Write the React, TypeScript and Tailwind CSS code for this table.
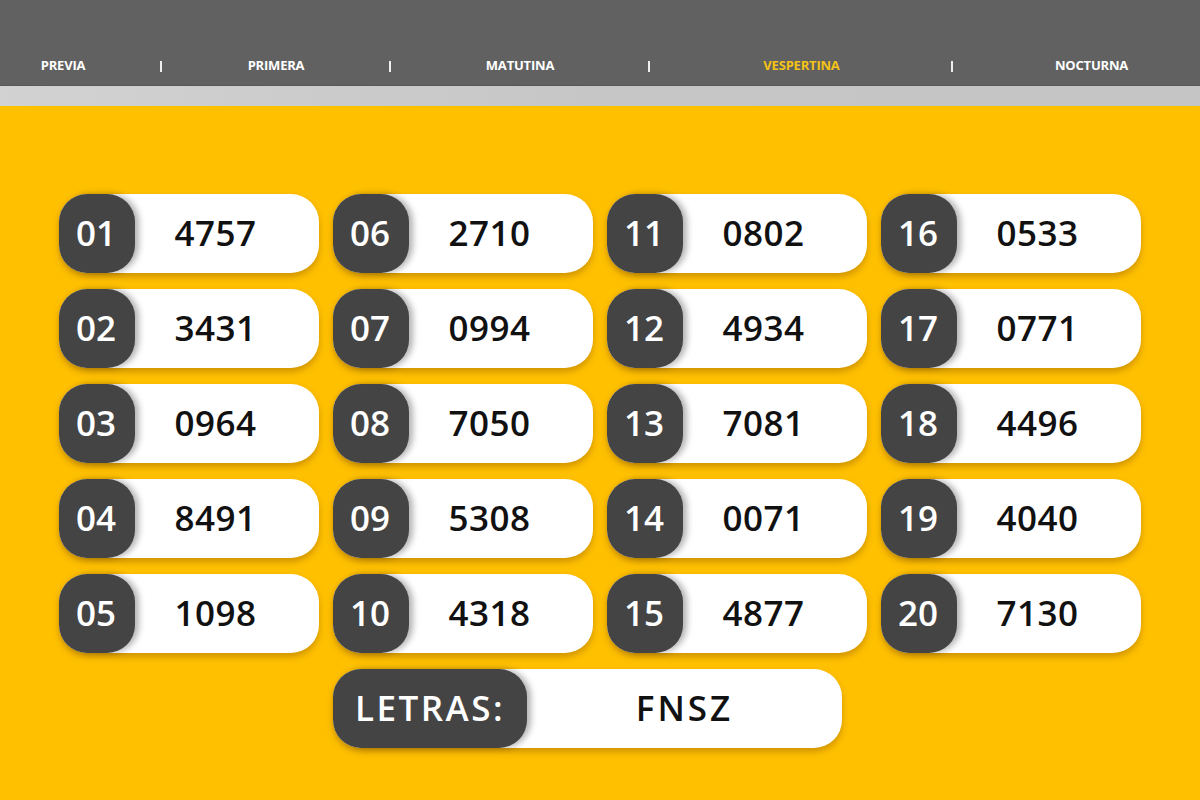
import React from "react";

const nums = [
  ["01", "4757"], ["06", "2710"], ["11", "0802"], ["16", "0533"],
  ["02", "3431"], ["07", "0994"], ["12", "4934"], ["17", "0771"],
  ["03", "0964"], ["08", "7050"], ["13", "7081"], ["18", "4496"],
  ["04", "8491"], ["09", "5308"], ["14", "0071"], ["19", "4040"],
  ["05", "1098"], ["10", "4318"], ["15", "4877"], ["20", "7130"],
];

const Sep = ({ w }: { w: string }) => (
  <div className={`${w} flex justify-center`}>
    <div className="w-[2px] h-[11px] bg-white/90" />
  </div>
);

export default function App() {
  const font = { fontFamily: '"Open Sans", "Liberation Sans", sans-serif' };
  return (
    <div className="w-[1200px] h-[800px] bg-[#ffc000] overflow-hidden" style={font}>
      <div className="h-[86px] bg-[#616161] border-b border-[#575757] flex items-end pb-[12px]">
        <div className="flex items-center h-[14px] text-[13px] font-bold text-white tracking-[-0.2px]">
          <div className="w-[126px] text-center">PREVIA</div>
          <Sep w="w-[70px]" />
          <div className="w-[160px] text-center">PRIMERA</div>
          <Sep w="w-[68px]" />
          <div className="w-[192px] text-center">MATUTINA</div>
          <Sep w="w-[66px]" />
          <div className="w-[239px] text-center text-[#f3c316]">VESPERTINA</div>
          <Sep w="w-[62px]" />
          <div className="w-[217px] text-center">NOCTURNA</div>
        </div>
      </div>
      <div className="h-[20px] bg-gradient-to-r from-[#d2d2d2] via-[#c6c6c6] to-[#c5c5c5]" />
      <div className="pt-[88px] pl-[59px]">
        <div className="grid grid-cols-[repeat(4,260px)] gap-x-[14px] gap-y-[16px] w-[1084px]">
          {[0, 1, 2, 3, 4].map((r) =>
            [0, 1, 2, 3].map((c) => {
              const [k, v] = nums[r * 4 + c];
              return (
                <div
                  key={k}
                  className="grid h-[79px] rounded-[28px] bg-white shadow-[0_4px_6px_rgba(120,70,0,0.35)]"
                >
                  <div className="col-start-1 row-start-1 justify-self-start h-[79px] rounded-[28px] bg-[#444444] pl-[17px] pr-[19px] flex items-center text-white text-[35px] font-semibold shadow-[4px_0_6px_rgba(0,0,0,0.3)]">
                    {k}
                  </div>
                  <div className="col-start-1 row-start-1 pl-[53px] flex items-center justify-center text-[35px] font-semibold text-[#111] tracking-[0.5px]">
                    {v}
                  </div>
                </div>
              );
            })
          )}
        </div>
        <div className="mt-[16px] ml-[274px] w-[509px] h-[79px] rounded-[28px] bg-white flex shadow-[0_4px_6px_rgba(120,70,0,0.35)]">
          <div className="h-[79px] w-[194px] rounded-[28px] bg-[#444444] flex items-center justify-center text-white text-[35px] font-semibold tracking-[2.5px] shadow-[4px_0_6px_rgba(0,0,0,0.3)]">
            LETRAS:
          </div>
          <div className="flex-1 flex items-center justify-center text-[35px] font-semibold text-[#111] tracking-[3px]">
            FNSZ
          </div>
        </div>
      </div>
    </div>
  );
}
